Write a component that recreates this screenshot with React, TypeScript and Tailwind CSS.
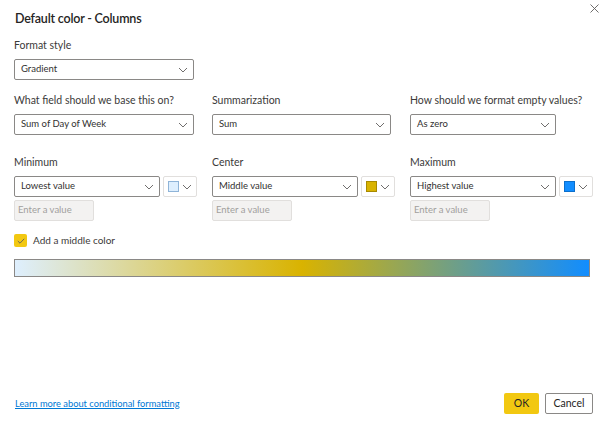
import React from 'react';

const Chevron = () => (
  <svg width="10" height="6" viewBox="0 0 10 6" fill="none" className="shrink-0">
    <path d="M1 1l4 4 4-4" stroke="#605e5c" strokeWidth="0.9" />
  </svg>
);

const Dropdown: React.FC<{ value: string; width: string }> = ({ value, width }) => (
  <div
    className={`${width} h-[21px] flex items-center justify-between pl-[6px] pr-[5px] border border-[#8a8886] rounded-[2px] bg-white text-[9.5px] text-[#323130]`}
  >
    <span>{value}</span>
    <Chevron />
  </div>
);

const ColorPicker: React.FC<{ color: string; border: string }> = ({ color, border }) => (
  <div className="w-[34px] h-[21px] flex items-center justify-between pl-[4px] pr-[4px] border border-[#e1dfdd] rounded-[2px] bg-white">
    <div className={`w-[11px] h-[11px] border ${border}`} style={{ background: color }} />
    <Chevron />
  </div>
);

const ValueInput = () => (
  <div className="w-[80px] h-[21px] flex items-center pl-[3px] mt-[3px] bg-[#f3f2f1] border border-[#e1dfdd] rounded-[2px] text-[9.5px] text-[#a19f9d]">
    Enter a value
  </div>
);

const Label: React.FC<{ children: React.ReactNode }> = ({ children }) => (
  <div className="text-[10.5px] text-[#3b3a39] h-[14px] leading-[14px] mb-[7px]">{children}</div>
);

const stops = [
  { label: 'Minimum', value: 'Lowest value', color: '#deeffe', border: 'border-[#8fb4d8]' },
  { label: 'Center', value: 'Middle value', color: '#d9b300', border: 'border-[#a88a00]' },
  { label: 'Maximum', value: 'Highest value', color: '#118dff', border: 'border-[#0b6fcc]' },
];

export default function App() {
  return (
    <div
      className="w-[610px] h-[430px] bg-white relative flex flex-col px-[14px] pt-[10px] pb-[16px]"
      style={{ fontFamily: 'Lato, "Open Sans", sans-serif' }}
    >
      <button className="absolute right-[11px] top-[3px] w-[10px] h-[10px] flex items-center justify-center">
        <svg width="9" height="9" viewBox="0 0 9 9">
          <path d="M0.5 0.5l8 8M8.5 0.5l-8 8" stroke="#605e5c" strokeWidth="0.9" />
        </svg>
      </button>

      <h1 className="text-[12.5px] font-semibold tracking-[-0.2px] text-[#252423] leading-[18px] ml-[1px]">
        Default color - Columns
      </h1>

      <div className="mt-[10px]">
        <Label>Format style</Label>
        <Dropdown value="Gradient" width="w-[180px]" />
      </div>

      <div className="grid grid-cols-[198px_198px_198px] mt-[13px]">
        <div>
          <Label>What field should we base this on?</Label>
          <Dropdown value="Sum of Day of Week" width="w-[180px]" />
        </div>
        <div>
          <Label>Summarization</Label>
          <Dropdown value="Sum" width="w-[179px]" />
        </div>
        <div>
          <Label>How should we format empty values?</Label>
          <Dropdown value="As zero" width="w-[146px]" />
        </div>
      </div>

      <div className="grid grid-cols-[198px_198px_198px] mt-[20px]">
        {stops.map((s) => (
          <div key={s.label}>
            <Label>{s.label}</Label>
            <div className="flex gap-[3px]">
              <Dropdown value={s.value} width="w-[146px]" />
              <ColorPicker color={s.color} border={s.border} />
            </div>
            <ValueInput />
          </div>
        ))}
      </div>

      <div className="flex items-center mt-[12px] gap-[6px]">
        <div className="w-[13px] h-[13px] bg-[#f2c811] rounded-[2px] flex items-center justify-center">
          <svg width="8" height="6" viewBox="0 0 8 6" fill="none">
            <path d="M0.8 3l2.2 2.2L7.2 0.8" stroke="#605e5c" strokeWidth="0.9" />
          </svg>
        </div>
        <span className="text-[10px] text-[#3b3a39]">Add a middle color</span>
      </div>

      <div
        className="mt-[11px] h-[18px] w-[576px] border border-[#8a8886]"
        style={{ background: 'linear-gradient(to right, #deeffe 0%, #d9b300 50%, #118dff 100%)' }}
      />

      <div className="mt-auto flex items-center justify-between">
        <a href="#" className="text-[9.3px] text-[#0078d4] underline ml-[1px]">
          Learn more about conditional formatting
        </a>
        <div className="flex gap-[6px] mr-[3px]">
          <button className="w-[35px] h-[21px] bg-[#f2c811] rounded-[2px] text-[10.5px] text-[#252423]">
            OK
          </button>
          <button className="w-[48px] h-[21px] bg-white border border-[#8a8886] rounded-[2px] text-[10.5px] text-[#252423]">
            Cancel
          </button>
        </div>
      </div>
    </div>
  );
}
